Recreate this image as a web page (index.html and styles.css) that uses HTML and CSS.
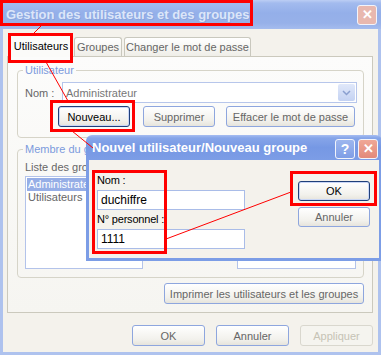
FILE: index.html
```html
<!DOCTYPE html>
<html>
<head>
<meta charset="utf-8">
<title>Gestion des utilisateurs et des groupes</title>
<link rel="stylesheet" href="styles.css">
</head>
<body>
<div class="Desk">

<div class="Win">
    <div class="Caption">
        <span class="CaptionText">Gestion des utilisateurs et des groupes</span>
        <span class="CapBtn CloseOff">&#x2715;</span>
    </div>
    <div class="Frame">
        <div class="Tabs">
            <div class="Tab Sel">Utilisateurs</div>
            <div class="Tab T2">Groupes</div>
            <div class="Tab T3">Changer le mot de passe</div>
        </div>
        <div class="Panel">
            <fieldset class="Group G1">
                <legend>Utilisateur</legend>
                <div class="Row">
                    <label class="Lbl">Nom :</label>
                    <div class="Combo">
                        <span>Administrateur</span>
                        <span class="Drop"><svg width="9" height="6" viewBox="0 0 9 6"><path d="M1 1 L4.5 4.5 L8 1" fill="none" stroke="#8A9FCF" stroke-width="1.5"/></svg></span>
                    </div>
                </div>
                <div class="BtnRow">
                    <div class="Btn Def BNew">Nouveau...</div>
                    <div class="Btn BDel">Supprimer</div>
                    <div class="Btn BPw">Effacer le mot de passe</div>
                </div>
            </fieldset>
            <fieldset class="Group G2">
                <legend>Membre du groupe</legend>
                <div class="Cols">
                    <div class="ColL">
                        <div class="Lbl">Liste des groupes :</div>
                        <div class="List">
                            <div class="Item Hi">Administrateurs</div>
                            <div class="Item">Utilisateurs</div>
                        </div>
                    </div>
                    <div class="ColR">
                        <div class="Lbl">Membres :</div>
                        <div class="List"></div>
                    </div>
                </div>
            </fieldset>
            <div class="PrintRow">
                <div class="Btn BPrint">Imprimer les utilisateurs et les groupes</div>
            </div>
        </div>
        <div class="Bottom">
            <div class="Btn BBot">OK</div>
            <div class="Btn BBot">Annuler</div>
            <div class="Btn BBot Off">Appliquer</div>
        </div>
    </div>
</div>

<div class="Child">
    <div class="ChildCap">
        <span class="ChildText">Nouvel utilisateur/Nouveau groupe</span>
        <span class="CapBtns">
            <span class="CapBtn Help">?</span>
            <span class="CapBtn CloseOn">&#x2715;</span>
        </span>
    </div>
    <div class="ChildBody">
        <div class="Fields">
            <div class="Lbl Dark">Nom :</div>
            <div class="Edit">duchiffre</div>
            <div class="Lbl Dark">N° personnel :</div>
            <div class="Edit">1111</div>
        </div>
        <div class="Side">
            <div class="Btn Def BSide">OK</div>
            <div class="Btn BSide">Annuler</div>
        </div>
    </div>
</div>

<!-- red annotations drawn over the screenshot -->
<svg class="Marks" width="381" height="355" viewBox="0 0 381 355">
    <g fill="none" stroke="#FF0000" stroke-width="3">
        <rect x="1.5" y="1.5" width="250" height="23"/>
        <rect x="9.5" y="34.5" width="62" height="27"/>
        <rect x="51.5" y="101.5" width="82" height="29"/>
        <rect x="93.5" y="171.5" width="72" height="81"/>
        <rect x="291.5" y="172.5" width="84" height="32"/>
    </g>
    <g stroke="#FF0000" stroke-width="1">
        <line x1="43" y1="24" x2="33" y2="34"/>
        <line x1="46" y1="62" x2="68" y2="101"/>
        <line x1="72" y1="131" x2="93" y2="148"/>
        <line x1="166" y1="239" x2="291" y2="192"/>
    </g>
</svg>

</div>
</body>
</html>
```

FILE: styles.css
```css
body { margin: 0; overflow: hidden; font-family: "Liberation Sans", Arial, sans-serif; font-size: 11px; color: #555; }
.Desk { position: relative; width: 381px; height: 355px; overflow: hidden; background: #F4F2EC; }

.Win { width: 381px; height: 355px; display: flex; flex-direction: column; }
.Caption { height: 29px; flex: none; display: flex; align-items: center; justify-content: space-between; padding: 0 4px 0 6px; box-sizing: border-box; background: linear-gradient(#BCCEF4 0, #A3BBEE 3px, #94AFE9 45%, #97B1E9 80%, #A5BCEE 100%); }
.CaptionText { font-size: 13px; font-weight: bold; color: #DCE6F9; text-shadow: 1px 1px 0 #8BA5DE; }
.CapBtn { width: 19px; height: 19px; display: flex; align-items: center; justify-content: center; border: 1px solid #F2F4FB; border-radius: 3px; color: #fff; font-weight: bold; box-sizing: border-box; }
.CloseOff { width: 20px; height: 20px; background: #E8B8AF; font-size: 13px; }

.Frame { flex: 1; border: 3px solid #AEC2EE; border-top: 0; padding: 4px 5px 0 4px; }
.Tabs { display: flex; align-items: flex-end; height: 23px; padding-left: 3px; }
.Tab { height: 19px; box-sizing: border-box; border: 1px solid #C9C8BE; border-bottom: 0; border-radius: 3px 3px 0 0; background: linear-gradient(#FFFFFF, #EFEEE8); color: #666; display: flex; align-items: center; justify-content: center; margin-right: 2px; }
.Sel { height: 24px; width: 62px; margin-bottom: -1px; background: #FBFBF9; color: #000; position: relative; z-index: 1; }
.T2 { width: 48px; }
.T3 { width: 127px; }

.Panel { height: 257px; box-sizing: border-box; border: 1px solid #CBC9BD; background: linear-gradient(#FCFCFB, #F6F5F1); padding: 7px 8px 0 9px; }
.Group { margin: 0; border: 1px solid #D6D4C8; border-radius: 4px; padding: 6px 6px 0 7px; }
.Group legend { color: #7C9BDD; padding: 0 2px; margin-left: -2px; }
.G1 { height: 74px; box-sizing: border-box; }
.G2 { margin-top: 5px; height: 135px; box-sizing: border-box; padding-top: 6px; }

.Row { display: flex; align-items: center; }
.Lbl { width: 37px; color: #666; }
.Combo { width: 295px; height: 21px; box-sizing: border-box; border: 1px solid #B7C6EB; background: #fff; display: flex; align-items: center; justify-content: space-between; padding: 0 1px 0 3px; color: #777; }
.Drop { width: 17px; height: 17px; background: linear-gradient(#E0E8FA, #C4D2F2); border-radius: 2px; display: flex; align-items: center; justify-content: center; }

.BtnRow { display: flex; margin-top: 3px; padding-left: 33px; }
.Btn { height: 21px; box-sizing: border-box; border: 1px solid #8EA6DE; border-radius: 3px; background: linear-gradient(#FFFFFF, #F2F1EC 70%, #E6E4DC); display: flex; align-items: center; justify-content: center; color: #666; }
.Def { border-color: #203F7A; color: #000; box-shadow: inset 0 0 0 1px #C9D6F6; }
.BNew { width: 72px; }
.BDel { width: 72px; margin-left: 13px; }
.BPw { width: 129px; margin-left: 11px; }

.Cols { display: flex; }
.ColL .Lbl { width: auto; height: 15px; }
.ColL { width: 118px; }
.ColR { width: 119px; margin-left: 94px; }
.ColR .Lbl { width: auto; height: 15px; }
.List { height: 93px; box-sizing: border-box; border: 1px solid #B3C3EA; background: #fff; padding: 1px; }
.Item { height: 13px; line-height: 13px; padding-left: 1px; color: #666; white-space: nowrap; overflow: hidden; }
.Hi { background: #96AEE6; color: #fff; }

.PrintRow { display: flex; justify-content: flex-end; margin-top: 5px; }
.BPrint { width: 200px; }

.Bottom { display: flex; justify-content: flex-end; gap: 11px; margin-top: 12px; }
.BBot { width: 73px; }
.Off { color: #C6C3B5; border-color: #D9D7CE; background: #F5F4EF; }

.Child { position: absolute; left: 86px; top: 135px; width: 296px; height: 126px; display: flex; flex-direction: column; z-index: 2; }
.ChildCap { height: 25px; flex: none; border-radius: 6px 6px 0 0; background: linear-gradient(#A6BDF1 0, #86A5E9 3px, #7698E4 50%, #7C9DE6 100%); display: flex; align-items: center; justify-content: space-between; padding: 0 4px 0 6px; }
.ChildText { font-size: 13px; font-weight: bold; color: #fff; }
.CapBtns { display: flex; gap: 3px; margin-top: 2px; }
.Help { width: 20px; height: 20px; background: linear-gradient(#9DB6EE, #7F9EE6); font-size: 14px; }
.CloseOn { width: 20px; height: 20px; background: linear-gradient(#F0A897, #E2897A); font-size: 13px; }
.ChildBody { flex: 1; display: flex; border: 3px solid #7C9DE6; border-top: 0; background: #F4F2EC; padding: 14px 0 0 8px; }
.Fields { width: 148px; }
.Dark { width: auto; color: #000; height: 16px; letter-spacing: -0.2px; }
.Edit { height: 20px; box-sizing: border-box; border: 1px solid #A9BCE8; background: #fff; padding-left: 3px; display: flex; align-items: center; color: #000; font-size: 12px; margin-bottom: 3px; }
.Side { margin-left: 53px; padding-top: 7px; }
.BSide { width: 72px; height: 20px; margin-bottom: 6px; }

.Marks { position: absolute; left: 0; top: 0; z-index: 3; pointer-events: none; }
```
